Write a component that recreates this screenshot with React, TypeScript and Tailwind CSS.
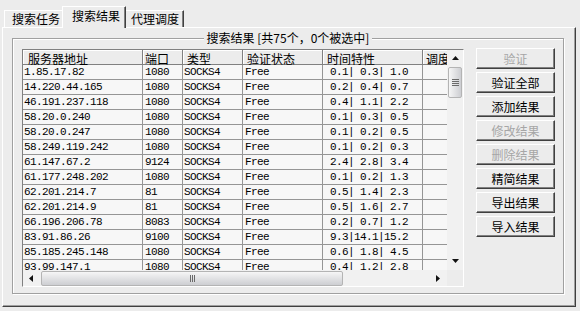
import React from 'react';

type Row = [string, string, string, string, number[]];

const rows: Row[] = [
  ['1.85.17.82', '1080', 'SOCKS4', 'Free', [0.1, 0.3, 1.0]],
  ['14.220.44.165', '1080', 'SOCKS4', 'Free', [0.2, 0.4, 0.7]],
  ['46.191.237.118', '1080', 'SOCKS4', 'Free', [0.4, 1.1, 2.2]],
  ['58.20.0.240', '1080', 'SOCKS4', 'Free', [0.1, 0.3, 0.5]],
  ['58.20.0.247', '1080', 'SOCKS4', 'Free', [0.1, 0.2, 0.5]],
  ['58.249.119.242', '1080', 'SOCKS4', 'Free', [0.1, 0.2, 0.3]],
  ['61.147.67.2', '9124', 'SOCKS4', 'Free', [2.4, 2.8, 3.4]],
  ['61.177.248.202', '1080', 'SOCKS4', 'Free', [0.1, 0.2, 1.3]],
  ['62.201.214.7', '81', 'SOCKS4', 'Free', [0.5, 1.4, 2.3]],
  ['62.201.214.9', '81', 'SOCKS4', 'Free', [0.5, 1.6, 2.7]],
  ['66.196.206.78', '8083', 'SOCKS4', 'Free', [0.2, 0.7, 1.2]],
  ['83.91.86.26', '9100', 'SOCKS4', 'Free', [9.3, 14.1, 15.2]],
  ['85.185.245.148', '1080', 'SOCKS4', 'Free', [0.6, 1.8, 4.5]],
  ['93.99.147.1', '1080', 'SOCKS4', 'Free', [0.4, 1.2, 2.8]],
];

const headers = [
  { label: '服务器地址', cls: 'w-[120px] pl-[5px]' },
  { label: '端口', cls: 'w-[40px] pl-[2px]' },
  { label: '类型', cls: 'w-[60px] pl-[4px]' },
  { label: '验证状态', cls: 'w-[80px] pl-[4px]' },
  { label: '时间特性', cls: 'w-[100px] pl-[4px]' },
  { label: '调度', cls: 'w-[60px] pl-[3px]' },
];

const cellCls = [
  'w-[120px] pl-[1px]',
  'w-[40px] pl-[2px]',
  'w-[60px] pl-[1px]',
  'w-[80px] pl-[2px]',
  'w-[100px] pl-[1px]',
  'w-[60px] pl-[1px]',
];

const buttons = [
  { label: '验证', disabled: true },
  { label: '验证全部' },
  { label: '添加结果' },
  { label: '修改结果', disabled: true },
  { label: '删除结果', disabled: true },
  { label: '精简结果' },
  { label: '导出结果' },
  { label: '导入结果' },
];

const fmtTime = (t: number[]) => t.map((v) => v.toFixed(1).padStart(4)).join('|');

const Arrow = ({ dir }: { dir: 'up' | 'down' | 'left' | 'right' }) => {
  const pts = {
    up: '0,4 7,4 3.5,0',
    down: '0,0 7,0 3.5,4',
    left: '4,0 4,7 0,3.5',
    right: '0,0 0,7 4,3.5',
  }[dir];
  const vertical = dir === 'up' || dir === 'down';
  return (
    <svg width={vertical ? 7 : 4} height={vertical ? 4 : 7} viewBox={vertical ? '0 0 7 4' : '0 0 4 7'}>
      <polygon points={pts} fill="#111" />
    </svg>
  );
};

const ListView = () => (
  <div className="w-[442px] h-[238px] shrink-0 border border-t-[#808080] border-l-[#808080] border-r-white border-b-white flex flex-col bg-[#f7f7f7]">
    <div className="flex h-[220px]">
      <div className="w-[424px] h-[220px] overflow-hidden">
        <div className="flex w-[460px] bg-[#ececec]">
          {headers.map((h) => (
            <div
              key={h.label}
              className={`${h.cls} shrink-0 h-[15px] pt-px leading-[16px] border-r border-b border-[#808080] shadow-[inset_1px_1px_0_#fff] whitespace-nowrap`}
            >
              {h.label}
            </div>
          ))}
        </div>
        {rows.map((r) => (
          <div key={r[0]} className="flex w-[460px] font-['Liberation_Mono',monospace] text-[11px] tracking-[-0.6px]">
            {[r[0], r[1], r[2], r[3], fmtTime(r[4]), ''].map((v, i) => (
              <div
                key={i}
                className={`${cellCls[i]} shrink-0 h-[15px] leading-[15px] border-r border-b border-[#959595] whitespace-pre`}
              >
                {v}
              </div>
            ))}
          </div>
        ))}
      </div>
      <div className="w-[16px] h-[220px] flex flex-col bg-[#f1f1f1]">
        <div className="h-[16px] flex items-center justify-center">
          <Arrow dir="up" />
        </div>
        <div className="mt-[1px] mx-[1px] h-[31px] rounded-[2px] border border-[#b4b4b4] bg-linear-to-r from-[#f6f6f6] to-[#cdced2] flex flex-col items-center justify-center gap-[1px]">
          <div className="w-[7px] h-px bg-[#6a6a6a]" />
          <div className="w-[7px] h-px bg-[#6a6a6a]" />
          <div className="w-[7px] h-px bg-[#6a6a6a]" />
          <div className="w-[7px] h-px bg-[#6a6a6a]" />
        </div>
        <div className="flex-1" />
        <div className="h-[16px] pb-[3px] flex items-center justify-center">
          <Arrow dir="down" />
        </div>
      </div>
    </div>
    <div className="flex h-[16px]">
      <div className="w-[424px] h-[16px] flex items-center bg-[#f1f1f1]">
        <div className="w-[16px] h-[16px] flex items-center justify-center">
          <Arrow dir="left" />
        </div>
        <div className="ml-[2px] w-[302px] h-[15px] rounded-[2px] border border-[#b4b4b4] bg-linear-to-b from-[#f6f6f6] to-[#cdced2] flex items-center justify-center gap-[1px]">
          <div className="w-px h-[7px] bg-[#6a6a6a]" />
          <div className="w-px h-[7px] bg-[#6a6a6a]" />
          <div className="w-px h-[7px] bg-[#6a6a6a]" />
        </div>
        <div className="flex-1" />
        <div className="w-[16px] h-[16px] pr-[3px] flex items-center justify-center">
          <Arrow dir="right" />
        </div>
      </div>
      <div className="w-[16px] h-[16px] bg-[#ececec]" />
    </div>
  </div>
);

export default function App() {
  return (
    <div className="w-[580px] h-[311px] overflow-hidden bg-[#ececec] text-black text-[12px] font-['Noto_Sans_CJK_SC',sans-serif] select-none">
      <div className="relative z-10 flex items-end h-[27px] pl-[4px]">
        <div className="w-[58px] h-[17px] border-t border-l border-white pl-[7px] leading-[16px]">搜索任务</div>
        <div className="w-[64px] h-[22px] -mb-px bg-[#ececec] border-t border-l border-white border-r border-r-[#404040] shadow-[inset_-1px_0_0_#808080] pl-[9px] pt-[1px] leading-[16px]">
          搜索结果
        </div>
        <div className="w-[58px] h-[17px] border-t border-white border-r border-r-[#404040] shadow-[inset_-1px_0_0_#808080] pl-[5px] leading-[16px]">
          代理调度
        </div>
      </div>
      <div className="ml-[2px] w-[574px] h-[280px] border border-t-white border-l-white border-r-[#404040] border-b-[#404040] shadow-[inset_-1px_-1px_0_#a0a0a0] pl-[9px] pt-[10px]">
        <div className="relative w-[552px] h-[256px] border border-[#a0a0a0] shadow-[1px_1px_0_#fff,inset_1px_1px_0_#fff] flex pt-[10px] pl-[9px]">
          <div className="absolute -top-[8px] left-0 right-0 flex justify-center">
            <span className="bg-[#ececec] px-[3px] leading-[14px] whitespace-pre">搜索结果 [共75个，0个被选中]</span>
          </div>
          <ListView />
          <div className="ml-[12px] -mt-px flex flex-col gap-[3px]">
            {buttons.map((b) => (
              <div
                key={b.label}
                className={`w-[79px] h-[21px] border border-t-white border-l-white border-r-[#404040] border-b-[#404040] shadow-[inset_-1px_-1px_0_#808080] flex items-center justify-center leading-none ${
                  b.disabled ? 'text-[#a6a6a6]' : 'text-black'
                }`}
              >
                {b.label}
              </div>
            ))}
          </div>
        </div>
      </div>
    </div>
  );
}
